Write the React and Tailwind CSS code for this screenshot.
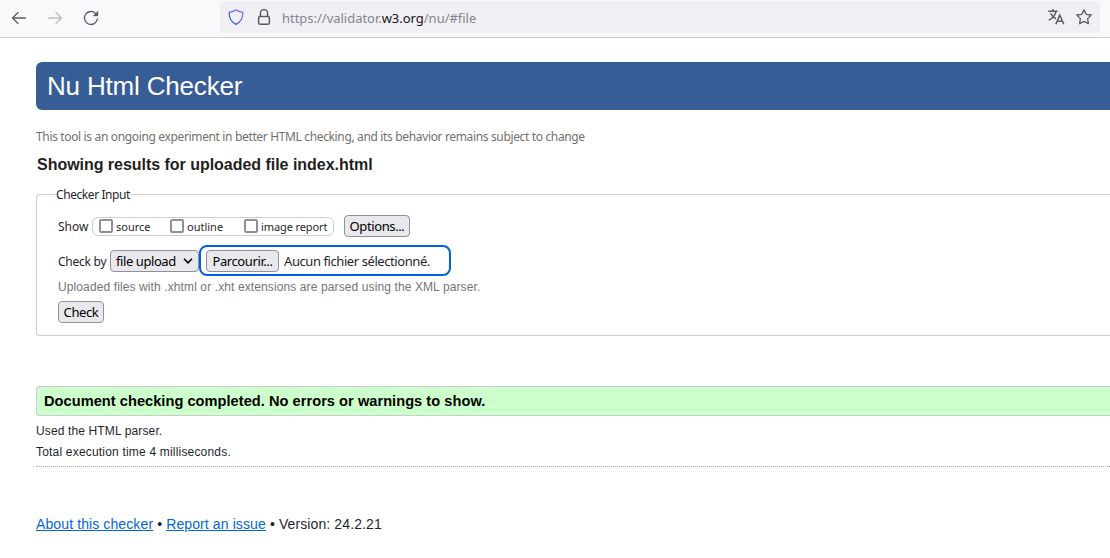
const Box = () => (
  <span className="h-[14px] w-[14px] shrink-0 rounded-[2px] border-2 border-[#8f8f9d] bg-white" />
);

const Button = ({ className, children }) => (
  <button
    className={`flex h-[22px] shrink-0 items-center justify-center whitespace-nowrap rounded-[4px] border border-[#8f8f9d] bg-[#e9e9ed] text-[13px] leading-5 tracking-[-0.4px] text-black ${className}`}
  >
    {children}
  </button>
);

const Toolbar = () => (
  <header className="flex h-[38px] items-start border-b border-[#cccccc] bg-[#f9f9fb]">
    <div className="flex h-[35px] w-[220px] shrink-0 items-center pl-[11px]">
      <svg width="16" height="16" viewBox="0 0 16 16" fill="none" stroke="#5b5b66" strokeWidth="1.3" strokeLinecap="round" strokeLinejoin="round">
        <path d="M14.5 8H1.5M7 2.5L1.5 8L7 13.5" />
      </svg>
      <svg className="ml-5" width="16" height="16" viewBox="0 0 16 16" fill="none" stroke="#bdbdc2" strokeWidth="1.3" strokeLinecap="round" strokeLinejoin="round">
        <path d="M1.5 8H14.5M9 2.5L14.5 8L9 13.5" />
      </svg>
      <svg className="ml-5" width="16" height="16" viewBox="0 0 16 16" fill="none" stroke="#5b5b66" strokeWidth="1.3" strokeLinecap="round">
        <path d="M12.8 3.6A6.5 6.5 0 1 0 14.4 9" />
        <path d="M15 1.2V6H10.2Z" fill="#5b5b66" stroke="#5b5b66" strokeWidth=".4" />
      </svg>
    </div>
    <div className="mt-px flex h-8 w-[880px] shrink-0 items-center rounded-[4px] bg-[#f0f0f4] pl-2 pr-2">
      <svg width="16" height="16" viewBox="0 0 16 16" fill="none">
        <defs>
          <linearGradient id="shield" x1="0" y1="1" x2="1" y2="0">
            <stop offset="0" stopColor="#1f5fd0" />
            <stop offset="1" stopColor="#9a68ff" />
          </linearGradient>
        </defs>
        <path d="M8 .8C6 2.4 3.7 3 1.6 3.2C1.3 3.2 1.2 3.4 1.2 3.7C1.1 9 3.3 13.2 8 15.3C12.7 13.2 14.9 9 14.8 3.7C14.8 3.4 14.7 3.2 14.4 3.2C12.3 3 10 2.4 8 .8Z" stroke="url(#shield)" strokeWidth="1.3" strokeLinejoin="round" />
      </svg>
      <svg className="ml-3" width="16" height="16" viewBox="0 0 16 16" fill="none" stroke="#5b5b66" strokeWidth="1.5">
        <rect x="2.6" y="7.4" width="10.8" height="7.8" rx="1.6" />
        <path d="M4.4 7.2V4.2A3.6 3.6 0 0 1 11.6 4.2V7.2" />
      </svg>
      <span className="ml-[10px] mt-[2px] whitespace-nowrap font-['Noto_Sans',sans-serif] text-[13px] leading-5 tracking-[-0.02px] text-[#85858c]">
        https://validator.<span className="text-[#15141a]">w3.org</span>/nu/#file
      </span>
      <svg className="ml-auto" width="17" height="16" viewBox="0 0 17 16" fill="none" stroke="#5b5b66" strokeWidth="1.5">
        <path d="M.2 2.2H9.6M4.9 0V2.2M2.6 4.4C4 7 5.8 8.8 8 9.8M8 2.4C7.3 6.3 4.8 9.2 .8 11.2" />
        <path d="M7.8 15.2L11.8 6.2L15.8 15.2M9.2 12.3H14.4" />
      </svg>
      <svg className="ml-[11px]" width="16" height="16" viewBox="0 0 16 16" fill="none" stroke="#5b5b66" strokeWidth="1.3" strokeLinejoin="round">
        <path d="M8 .9L10.2 5.3L15.2 6L11.6 9.6L12.4 14.7L8 12.4L3.6 14.7L4.4 9.6L.8 6L5.8 5.3Z" />
      </svg>
    </div>
  </header>
);

export default function App() {
  return (
    <div className="h-[558px] w-[1110px] overflow-hidden bg-white font-['Liberation_Sans',Arial,sans-serif] text-[#1f1f2b]">
      <Toolbar />
      <main className="flex flex-col pl-9 pt-6">
        <h1 className="flex h-12 items-center rounded-l-[6px] bg-[#365d95] pl-[11px] text-[26px] leading-8 tracking-[-0.18px] text-white">
          <span>Nu Html Checker</span>
        </h1>
        <p className="mt-[17px] h-5 whitespace-nowrap font-['Noto_Sans',sans-serif] text-[12px] leading-5 tracking-[-0.35px] text-[#707070]">
          <span>This tool is an ongoing experiment in better HTML checking, and its behavior remains subject to change</span>
        </p>
        <h2 className="mt-[6px] h-6 pl-px text-[16px] font-bold leading-6 tracking-[-0.03px] text-[#1f1f1f]">
          <span>Showing results for uploaded file index.html</span>
        </h2>

        <fieldset className="mt-[9px] h-[150px] rounded-l-[4px] border border-r-0 border-[#cccccc] pl-[21px] font-['Noto_Sans',sans-serif] text-[12px]">
          <legend className="-ml-[2px] h-[16px] whitespace-nowrap leading-[18px] tracking-[-0.42px]"><span>Checker Input</span></legend>
          <div className="mt-[13px] flex h-[22px] items-center">
            <span className="w-[34px] shrink-0 whitespace-nowrap pt-[2px]">Show</span>
            <div className="flex h-[19px] w-[242px] shrink-0 items-center rounded-[6px] border border-[#cccccc] pl-[6px] text-[11px]">
              <Box />
              <span className="ml-[3px] w-[54px] whitespace-nowrap pt-[2px]">source</span>
              <Box />
              <span className="ml-[3px] w-[57px] whitespace-nowrap pt-[2px]">outline</span>
              <Box />
              <span className="ml-[3px] whitespace-nowrap pt-[2px] tracking-[-0.1px]">image report</span>
            </div>
            <Button className="ml-[10px] w-[66px]">Options...</Button>
          </div>
          <div className="mt-2 flex h-[31px] items-center">
            <span className="w-[52px] shrink-0 whitespace-nowrap pt-[3px] tracking-[-0.25px]">Check by</span>
            <div className="flex h-[22px] w-[89px] shrink-0 items-center justify-between rounded-[4px] border border-[#8f8f9d] bg-[#e9e9ed] pl-[5px] pr-[5px] text-[13px] text-black">
              <span className="whitespace-nowrap leading-5 tracking-[-0.42px]">file upload</span>
              <svg width="10" height="6" viewBox="0 0 10 6" fill="none" stroke="#000" strokeWidth="1.6">
                <path d="M1 .8L5 4.8L9 .8" />
              </svg>
            </div>
            <div className="flex h-[31px] w-[252px] shrink-0 items-center rounded-[8px] border-2 border-[#0060df] pl-[5px] text-[13px]">
              <Button className="w-[73px]">Parcourir...</Button>
              <span className="ml-[5px] whitespace-nowrap pt-[2px] tracking-[-0.42px]">Aucun fichier sélectionné.</span>
            </div>
          </div>
          <p className="mt-[1px] h-5 whitespace-nowrap font-['Liberation_Sans',Arial,sans-serif] text-[12px] leading-5 tracking-[0.11px] text-[#757575]">
            <span>Uploaded files with .xhtml or .xht extensions are parsed using the XML parser.</span>
          </p>
          <Button className="mt-1 w-[46px]">Check</Button>
        </fieldset>

        <section className="mt-[50px] flex h-[30px] items-center rounded-l-[4px] border border-r-0 border-[#cccccc] bg-[#ccffcc] pl-[7px] pt-[2px] text-[14.6px] font-bold tracking-[0.04px] text-black">
          <span>Document checking completed. No errors or warnings to show.</span>
        </section>
        <p className="mt-[5px] h-5 text-[12px] leading-5 tracking-[0.13px]"><span>Used the HTML parser.</span></p>
        <p className="mt-px h-[25px] border-b border-dotted border-[#aaaaaa] text-[12px] leading-5 tracking-[0.19px]"><span>Total execution time 4 milliseconds.</span></p>
        <footer className="mt-[45px] h-6 whitespace-nowrap text-[14px] leading-6 tracking-[0.11px]">
          <a className="text-[#0366d6] underline">About this checker</a> • <a className="text-[#0366d6] underline">Report an issue</a> • Version: 24.2.21
        </footer>
      </main>
    </div>
  );
}
